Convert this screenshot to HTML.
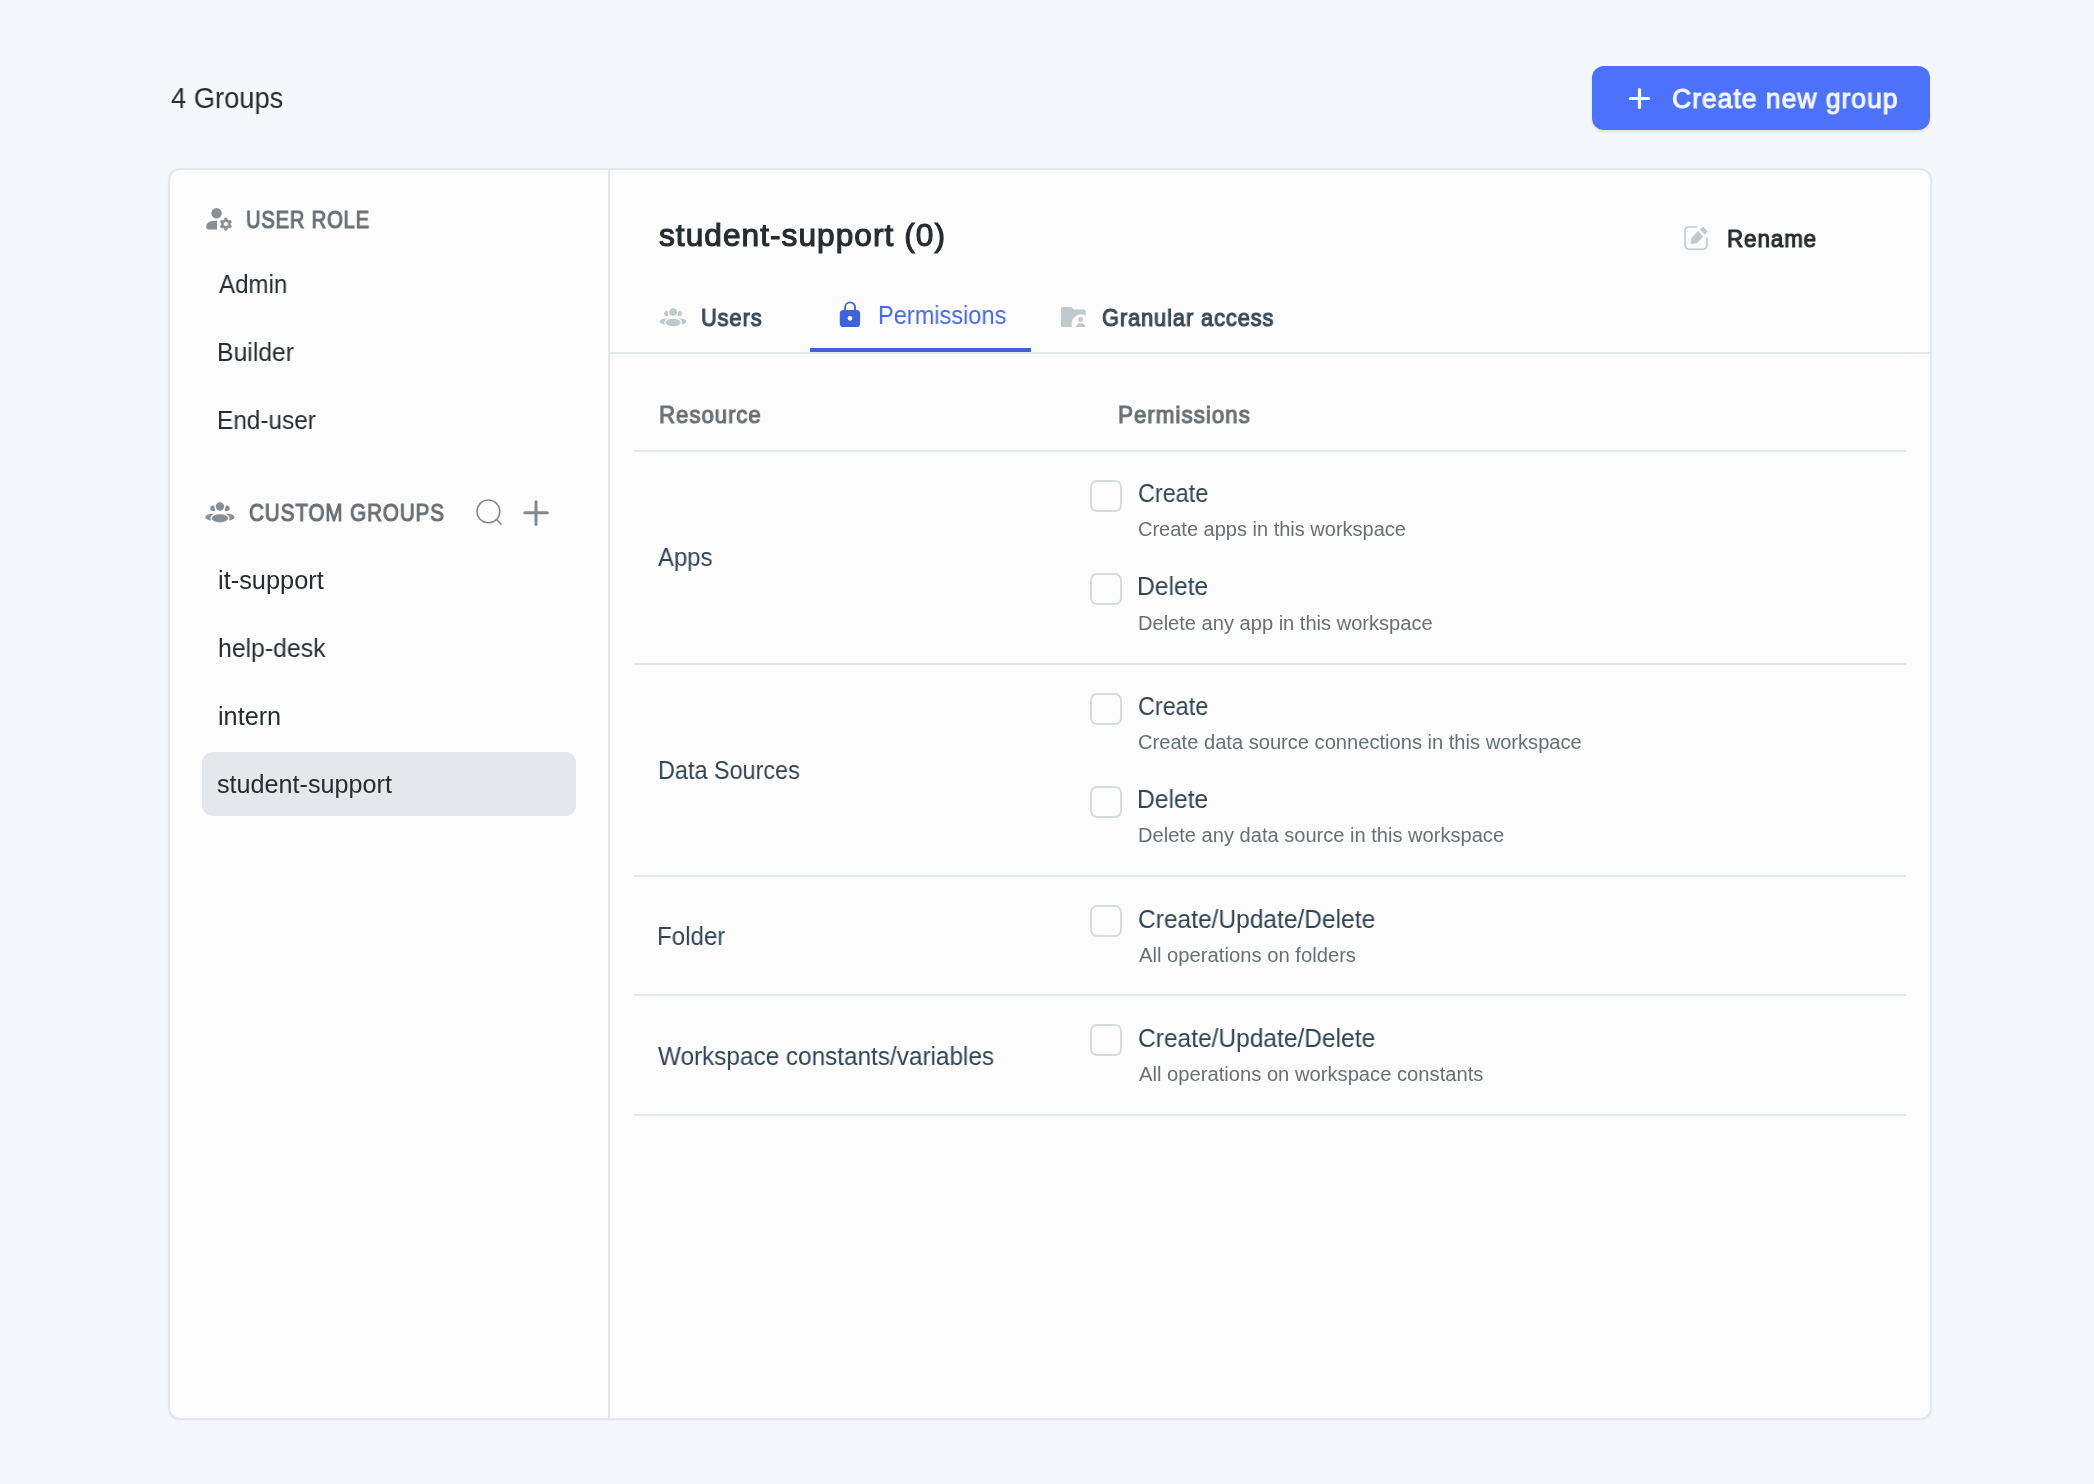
<!DOCTYPE html>
<html><head><meta charset="utf-8">
<style>
html,body{margin:0;padding:0;}
body{width:2094px;height:1484px;background:#f4f7fb;position:relative;overflow:hidden;font-family:"Liberation Sans",sans-serif;}
.t{position:absolute;white-space:nowrap;line-height:1;transform-origin:0 0;will-change:transform;}
.b{position:absolute;box-sizing:border-box;}
.ln{position:absolute;left:634px;width:1272px;height:2px;background:#e4e7eb;}
.cb{position:absolute;left:1090px;width:32px;height:32px;box-sizing:border-box;border:2px solid #d7dbdf;border-radius:7px;background:#fcfcfc;}
svg{position:absolute;left:0;top:0;}
</style></head><body>

<!-- header button -->
<div class="b" style="left:1592px;top:66px;width:338px;height:64px;background:#4d72fa;border-radius:12px;box-shadow:0 2px 3px rgba(16,24,40,0.10);"></div>

<!-- card -->
<div class="b" style="left:168px;top:168px;width:1764px;height:1252px;border:2px solid #e4e7eb;border-radius:12px;background:#fcfcfc;box-shadow:0 1px 2px rgba(16,24,40,0.04);"></div>
<div class="b" style="left:608px;top:170px;width:2px;height:1248px;background:#e4e7eb;"></div>

<!-- selected group -->
<div class="b" style="left:202px;top:752px;width:374px;height:64px;background:#e4e7eb;border-radius:11px;"></div>

<!-- tabs border + underline -->
<div class="b" style="left:610px;top:352px;width:1320px;height:2px;background:#e4e7eb;"></div>
<div class="b" style="left:810px;top:348px;width:221px;height:4px;background:#3e63dd;"></div>

<!-- table lines -->
<div class="ln" style="top:450px;"></div>
<div class="ln" style="top:663px;"></div>
<div class="ln" style="top:875px;"></div>
<div class="ln" style="top:994px;"></div>
<div class="ln" style="top:1114px;"></div>

<!-- checkboxes -->
<div class="cb" style="top:480px;"></div>
<div class="cb" style="top:573px;"></div>
<div class="cb" style="top:693px;"></div>
<div class="cb" style="top:786px;"></div>
<div class="cb" style="top:905px;"></div>
<div class="cb" style="top:1024px;"></div>

<svg width="2094" height="1484" viewBox="0 0 2094 1484">
  <!-- button plus -->
  <g stroke="#ffffff" stroke-width="3.2" stroke-linecap="round" fill="none">
    <line x1="1639.5" y1="89.5" x2="1639.5" y2="107.5"/>
    <line x1="1630.5" y1="98.5" x2="1648.5" y2="98.5"/>
  </g>

  <!-- user role icon -->
  <g fill="#889096">
    <circle cx="216.6" cy="213.3" r="5.2"/>
    <path d="M217 220.4 L217 229.4 L208.5 229.4 Q206.1 229.4 206.1 227 Q206.1 222.3 212 221 Z"/>
    <path fill-rule="evenodd" d="M223.85 220.55 L225.16 218.05 L226.64 218.05 L227.95 220.55 L230.77 220.43 L231.52 221.72 L230.00 224.10 L231.52 226.48 L230.77 227.77 L227.95 227.65 L226.64 230.15 L225.16 230.15 L223.85 227.65 L221.03 227.77 L220.28 226.48 L221.80 224.10 L220.28 221.72 L221.03 220.43 Z M228.40 224.10 A2.5 2.5 0 1 0 223.40 224.10 A2.5 2.5 0 1 0 228.40 224.10 Z" stroke="#889096" stroke-width="0.7" stroke-linejoin="round"/>
  </g>

  <g fill="#889096">
<circle cx="213.08" cy="508.24" r="2.83"/>
<circle cx="226.82" cy="508.24" r="2.83"/>
<ellipse cx="212.54" cy="517.21" rx="7.09" ry="3.38"/>
<ellipse cx="227.36" cy="517.21" rx="7.09" ry="3.38"/>
<circle cx="219.95" cy="506.50" r="4.90" stroke="#fcfcfc" stroke-width="1.4"/>
<ellipse cx="219.95" cy="518.30" rx="8.98" ry="4.79" stroke="#fcfcfc" stroke-width="1.4"/>
</g>

  <!-- search icon -->
  <g stroke="#828a90" stroke-width="1.6" fill="none" stroke-linecap="round">
    <circle cx="488.4" cy="511.4" r="11.4"/>
    <line x1="497" y1="520" x2="501.2" y2="524.2"/>
  </g>
  <!-- plus icon -->
  <g stroke="#828a90" stroke-width="3" stroke-linecap="round">
    <line x1="536" y1="501.7" x2="536" y2="524.2"/>
    <line x1="524.8" y1="512.8" x2="547.3" y2="512.8"/>
  </g>

  <!-- rename icon -->
  <g fill="none" stroke="#c1c8cd" stroke-width="1.6" stroke-linecap="round">
    <path d="M1696.5 227 L1689.2 227 Q1685 227 1685 231.2 L1685 245 Q1685 249.2 1689.2 249.2 L1702.8 249.2 Q1707 249.2 1707 245 L1707 238"/>
  </g>
  <g fill="#c1c8cd" stroke="#c1c8cd" stroke-width="0.8" stroke-linejoin="round">
    <path d="M1691.4 238.4 L1698 231.6 L1703 236.5 L1696.8 242.7 L1691.2 243.8 Z"/>
    <path d="M1700.3 229.4 L1703.1 227.2 L1707.2 231.4 L1704.6 234.3 Z"/>
  </g>

  <g fill="#c1c8cd">
<circle cx="666.80" cy="313.60" r="2.60"/>
<circle cx="679.40" cy="313.60" r="2.60"/>
<ellipse cx="666.30" cy="321.50" rx="6.50" ry="3.10"/>
<ellipse cx="679.90" cy="321.50" rx="6.50" ry="3.10"/>
<circle cx="673.10" cy="312.00" r="4.55" stroke="#fcfcfc" stroke-width="1.4"/>
<ellipse cx="673.10" cy="322.50" rx="8.30" ry="4.45" stroke="#fcfcfc" stroke-width="1.4"/>
</g>

  <!-- lock icon -->
  <g>
    <path d="M845.1 310.5 L845.1 307.4 A5 5 0 0 1 855.1 307.4 L855.1 310.5" fill="none" stroke="#3e63dd" stroke-width="1.9"/>
    <path fill-rule="evenodd" fill="#3e63dd" d="M843.4 309.9 L856.5 309.9 Q860.1 309.9 860.1 313.5 L860.1 323.4 Q860.1 327 856.5 327 L843.4 327 Q839.8 327 839.8 323.4 L839.8 313.5 Q839.8 309.9 843.4 309.9 Z M852.4 318.3 A2.4 2.4 0 1 0 847.6 318.3 A2.4 2.4 0 1 0 852.4 318.3 Z"/>
  </g>

  <!-- folder icon -->
  <g fill="#c1c8cd">
    <path d="M1062.8 306.9 L1070.6 306.9 Q1071.6 306.9 1072.3 307.7 L1073.4 309.4 L1084 309.4 Q1085.7 309.4 1085.7 311.1 L1085.7 315.6 A9.6 9.6 0 0 0 1072.1 327 L1062.8 327 Q1060.9 327 1060.9 325.1 L1060.9 308.8 Q1060.9 306.9 1062.8 306.9 Z"/>
    <circle cx="1080.7" cy="319.5" r="2.4"/>
    <path d="M1075.8 327 Q1076.5 323.2 1080.7 323.2 Q1084.9 323.2 1085.7 327 Z"/>
  </g>
</svg>

<div class="t" id="groups" style="left:171.00px;top:84.00px;font-size:29px;color:#262c30;transform:scaleX(0.9412);">4 Groups</div>
<div class="t" id="btn" style="left:1672.05px;top:85.00px;font-size:28px;color:#f3f6ff;-webkit-text-stroke:1.1px #f3f6ff;letter-spacing:1px;transform:scaleX(0.9492);">Create new group</div>
<div class="t" id="ur" style="left:246.24px;top:208.00px;font-size:24px;color:#687076;-webkit-text-stroke:1.1px #687076;letter-spacing:1px;transform:scaleX(0.8391);">USER ROLE</div>
<div class="t" id="admin" style="left:218.81px;top:272.00px;font-size:25px;color:#262c30;transform:scaleX(0.9629);">Admin</div>
<div class="t" id="builder" style="left:217.43px;top:340.00px;font-size:25px;color:#262c30;transform:scaleX(0.9895);">Builder</div>
<div class="t" id="enduser" style="left:217.06px;top:408.00px;font-size:25px;color:#262c30;transform:scaleX(0.9748);">End-user</div>
<div class="t" id="cg" style="left:249.00px;top:501.00px;font-size:24px;color:#687076;-webkit-text-stroke:1.1px #687076;letter-spacing:1px;transform:scaleX(0.8618);">CUSTOM GROUPS</div>
<div class="t" id="its" style="left:218.19px;top:568.00px;font-size:25px;color:#262c30;transform:scaleX(1.0146);">it-support</div>
<div class="t" id="hd" style="left:218.21px;top:636.00px;font-size:25px;color:#262c30;transform:scaleX(0.9917);">help-desk</div>
<div class="t" id="intern" style="left:218.20px;top:704.00px;font-size:25px;color:#262c30;transform:scaleX(1.0101);">intern</div>
<div class="t" id="ss" style="left:217.39px;top:772.00px;font-size:25px;color:#262c30;transform:scaleX(1.0069);">student-support</div>
<div class="t" id="title" style="left:659.00px;top:220.00px;font-size:31px;color:#262c30;-webkit-text-stroke:1.1px #262c30;letter-spacing:1px;transform:scaleX(1.0215);">student-support (0)</div>
<div class="t" id="rename" style="left:1727.07px;top:227.00px;font-size:24px;color:#262c30;-webkit-text-stroke:1.1px #262c30;letter-spacing:1px;transform:scaleX(0.9309);">Rename</div>
<div class="t" id="tusers" style="left:701.09px;top:306.00px;font-size:24px;color:#3b4a59;-webkit-text-stroke:1.1px #3b4a59;letter-spacing:1px;transform:scaleX(0.9091);">Users</div>
<div class="t" id="tperm" style="left:877.93px;top:303.00px;font-size:25px;color:#4368e3;transform:scaleX(0.9425);">Permissions</div>
<div class="t" id="tgran" style="left:1102.22px;top:306.30px;font-size:24px;color:#3b4a59;-webkit-text-stroke:1.1px #3b4a59;letter-spacing:1px;transform:scaleX(0.9079);">Granular access</div>
<div class="t" id="hres" style="left:658.50px;top:403.00px;font-size:24px;color:#687076;-webkit-text-stroke:1.1px #687076;letter-spacing:1px;transform:scaleX(0.9278);">Resource</div>
<div class="t" id="hperm" style="left:1118.49px;top:403.00px;font-size:24px;color:#687076;-webkit-text-stroke:1.1px #687076;letter-spacing:1px;transform:scaleX(0.9372);">Permissions</div>
<div class="t" id="apps" style="left:658.02px;top:545.00px;font-size:25px;color:#304454;transform:scaleX(0.9554);">Apps</div>
<div class="t" id="c1" style="left:1137.86px;top:481.00px;font-size:25px;color:#304454;transform:scaleX(0.9358);">Create</div>
<div class="t" id="c1d" style="left:1137.80px;top:519.00px;font-size:20px;color:#687076;transform:scaleX(0.9996);">Create apps in this workspace</div>
<div class="t" id="d1" style="left:1137.43px;top:574.00px;font-size:25px;color:#304454;transform:scaleX(0.9855);">Delete</div>
<div class="t" id="d1d" style="left:1138.40px;top:613.00px;font-size:20px;color:#687076;transform:scaleX(1.0038);">Delete any app in this workspace</div>
<div class="t" id="ds" style="left:658.13px;top:758.00px;font-size:25px;color:#304454;transform:scaleX(0.9363);">Data Sources</div>
<div class="t" id="c2" style="left:1137.86px;top:694.00px;font-size:25px;color:#304454;transform:scaleX(0.9358);">Create</div>
<div class="t" id="c2d" style="left:1137.79px;top:731.50px;font-size:20px;color:#687076;transform:scaleX(1.0055);">Create data source connections in this workspace</div>
<div class="t" id="d2" style="left:1137.43px;top:787.00px;font-size:25px;color:#304454;transform:scaleX(0.9855);">Delete</div>
<div class="t" id="d2d" style="left:1138.39px;top:824.50px;font-size:20px;color:#687076;transform:scaleX(1.0039);">Delete any data source in this workspace</div>
<div class="t" id="folder" style="left:657.09px;top:923.60px;font-size:25px;color:#304454;transform:scaleX(0.9638);">Folder</div>
<div class="t" id="c3" style="left:1137.82px;top:907.00px;font-size:25px;color:#304454;transform:scaleX(0.9808);">Create/Update/Delete</div>
<div class="t" id="c3d" style="left:1139.00px;top:945.00px;font-size:20px;color:#687076;transform:scaleX(1.0112);">All operations on folders</div>
<div class="t" id="ws" style="left:658.01px;top:1043.50px;font-size:25px;color:#304454;transform:scaleX(0.9725);">Workspace constants/variables</div>
<div class="t" id="c4" style="left:1137.82px;top:1025.50px;font-size:25px;color:#304454;transform:scaleX(0.9808);">Create/Update/Delete</div>
<div class="t" id="c4d" style="left:1139.00px;top:1064.00px;font-size:20px;color:#687076;transform:scaleX(1.0091);">All operations on workspace constants</div>

</body></html>
